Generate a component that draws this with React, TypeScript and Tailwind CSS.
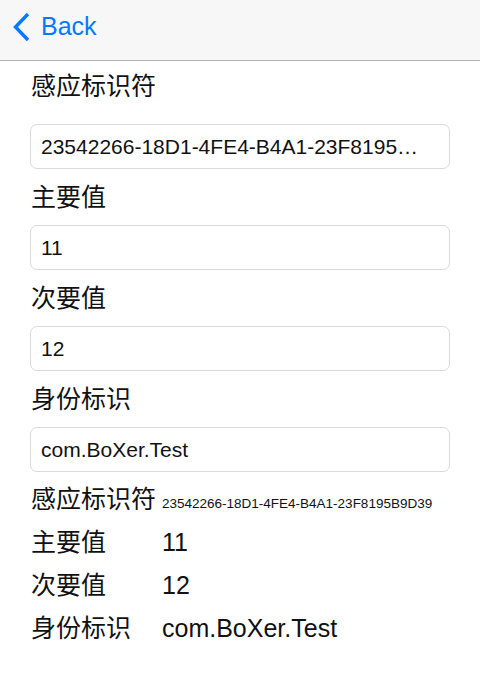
import React from 'react';

const FONT = "font-['Liberation_Sans','Noto_Sans_CJK_SC',sans-serif]";

const beacon = {
  uuid: '23542266-18D1-4FE4-B4A1-23F8195B9D39',
  major: '11',
  minor: '12',
  identifier: 'com.BoXer.Test',
};

const Field: React.FC<{ label: string; value: string; first?: boolean }> = ({ label, value, first }) => (
  <div className="flex flex-col">
    <div
      className={`flex px-[31px] text-[25px] leading-[29px] text-[#111] ${
        first ? 'h-[63px] items-start pt-[11px]' : 'h-[56px] items-center'
      }`}
    >
      {label}
    </div>
    <div className="px-[30px]">
      <input
        readOnly
        value={value}
        className={`${FONT} block h-[45px] w-full rounded-[7px] border border-[#d9d9d9] bg-white pl-[10px] pr-[20px] text-[21px] text-[#111] outline-none text-ellipsis`}
      />
    </div>
  </div>
);

const App: React.FC = () => {
  return (
    <div className={`${FONT} flex h-[684px] w-[480px] flex-col overflow-hidden bg-white`}>
      {/* Nav bar */}
      <header className="flex h-[61px] shrink-0 items-center border-b border-[#b2b2b2] bg-[#f7f7f7] pb-[7px]">
        <button className="flex items-center gap-[9px] pl-[12px] text-[#007aff]">
          <svg width="20" height="30" viewBox="0 0 20 30" fill="none">
            <path d="M16 2 L3.5 15 L16 28" stroke="#007aff" strokeWidth="3.4" strokeLinecap="butt" strokeLinejoin="miter" />
          </svg>
          <span className="text-[25px] leading-none">Back</span>
        </button>
      </header>

      {/* Edit form */}
      <Field first label="感应标识符" value={beacon.uuid} />
      <Field label="主要值" value={beacon.major} />
      <Field label="次要值" value={beacon.minor} />
      <Field label="身份标识" value={beacon.identifier} />

      {/* Summary */}
      <div className="mt-[6px] flex flex-col px-[31px] text-[25px] text-[#111]">
        <div className="flex h-[43px] items-center">
          <div className="flex items-baseline">
            <span className="w-[131px] shrink-0 leading-[29px]">感应标识符</span>
            <span className="text-[13.5px]">{beacon.uuid}</span>
          </div>
        </div>
        <div className="flex h-[43px] items-center">
          <span className="w-[131px] shrink-0 leading-[29px]">主要值</span>
          <span>{beacon.major}</span>
        </div>
        <div className="flex h-[43px] items-center">
          <span className="w-[131px] shrink-0 leading-[29px]">次要值</span>
          <span>{beacon.minor}</span>
        </div>
        <div className="flex h-[43px] items-center">
          <span className="w-[131px] shrink-0 leading-[29px]">身份标识</span>
          <span>{beacon.identifier}</span>
        </div>
      </div>
    </div>
  );
};

export default App;
